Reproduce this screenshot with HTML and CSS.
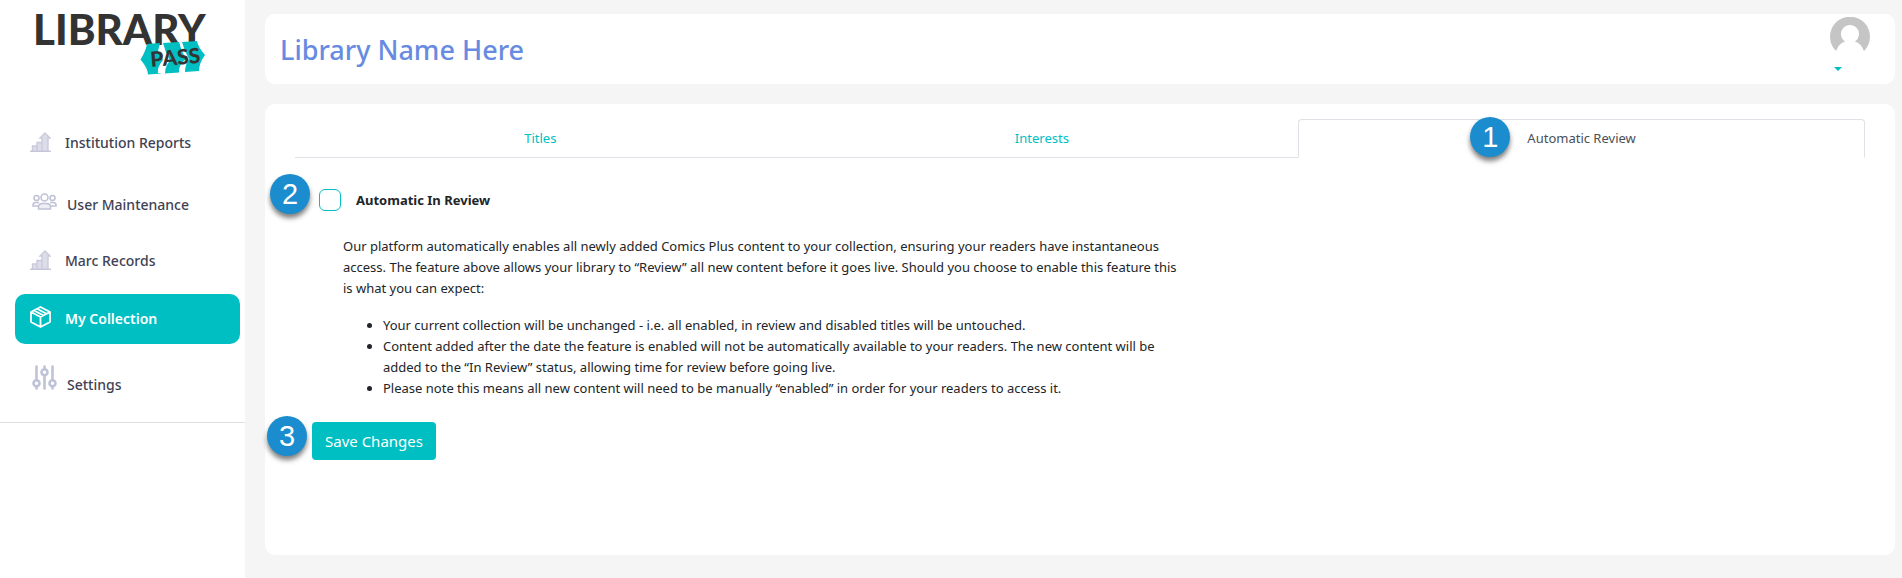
FILE: index.html
```html
<!DOCTYPE html>
<html lang="en">
<head>
<meta charset="utf-8">
<title>My Collection - Library Pass</title>
<meta name="viewport" content="width=device-width, initial-scale=1">
<link rel="stylesheet" href="styles.css">
</head>
<body>
<svg width="0" height="0" class="sprite" aria-hidden="true">
	<symbol id="icon-chart" viewBox="0 0 21 20">
		<path d="M2.500 19v-5H7v5M7 19v-8.500h5V19M12 19V6h-2l5-5 5 5h-2v13" fill="#dcdde8" stroke="#c9cbdc" stroke-width="1.4"/>
		<path d="M0 19.3h21" stroke="#c3c5d8" stroke-width="1.4"/>
	</symbol>
</svg>
<div class="wrapper">
	<nav class="sidebar">
		<a href="#" class="logo">
			<svg width="180" height="70" viewBox="0 0 180 70" role="img" aria-label="Library Pass">
				<text x="1" y="37" class="logo_big">LIBRARY</text>
				<path d="M115 36l13-1-2 8 5 9q-6 7-5 13l4 .500-14 1q0-6-7.500-15 5-8 6.500-15.500z" fill="#00bfc3"/>
				<path d="M131 35l16-1q2 9 7 17-8 6-7 13.500l-14 1q0-7 5-13-5-9-7-17.500zM150 34l15-1q1 6 8 14-6 8-6 16l-14 1q0-7 4-13-5-9-7-17z" fill="#00bfc3"/>
				<text x="119" y="59" transform="rotate(-5 119 59)" class="logo_small">PASS</text>
			</svg>
		</a>
		<ul class="menu">
			<li><a href="#"><svg class="icon" width="21" height="20"><use href="#icon-chart"/></svg>Institution Reports</a></li>
			<li class="users"><a href="#"><svg class="icon icon_tall" width="25" height="17" viewBox="0 0 25 17" fill="none" stroke="#bfc2d6" stroke-width="1.5">
				<circle cx="4.500" cy="5" r="2.500"/><circle cx="20.500" cy="5" r="2.500"/><circle cx="12.500" cy="4.500" r="3.500"/>
				<path d="M6 13H1v-1q0-2.500 3-2.500h3M19 13h5v-1q0-2.500-3-2.500h-3"/>
				<path d="M6.500 16v-2q0-3.500 4-3.500h4q4 0 4 3.500v2z" fill="#eeeef4"/>
			</svg>User Maintenance</a></li>
			<li class="marc"><a href="#"><svg class="icon" width="21" height="20"><use href="#icon-chart"/></svg>Marc Records</a></li>
			<li class="active"><a href="#"><svg class="icon" width="21" height="22" viewBox="0 0 21 22" fill="none" stroke="#fff" stroke-width="1.800" stroke-linejoin="round">
				<path d="M10.500 1l9.500 5v10l-9.500 5L1 16V6zM1 6l9.500 5L20 6M10.500 11v10M4 4.500l9.500 5M7 2.800l9.500 5"/>
			</svg>My Collection</a></li>
			<li><a href="#"><svg class="icon icon_tall" width="25" height="25" viewBox="0 0 25 25" fill="none" stroke="#bfc3d7" stroke-width="2.600" stroke-linecap="round">
				<path d="M4.500 1.500v13M4.500 22v1.500M12.500 1.500V4M12.500 11v12.500M20.500 1.500v13M20.500 22v1.500"/>
				<circle cx="4.500" cy="18.300" r="3"/><circle cx="12.500" cy="7.300" r="3"/><circle cx="20.500" cy="18.300" r="3"/>
			</svg>Settings</a></li>
		</ul>
	</nav>
	<div class="main">
		<header class="card topbar">
			<h1>Library Name Here</h1>
			<button type="button" class="user" aria-label="Account">
				<svg width="40" height="40" viewBox="0 0 40 40">
					<path d="M6 34A20 20 0 1 1 34 34Q31 26 25 24.500A9 9 0 1 0 15 24.500Q9 26 6 34z" fill="#c5c5c5"/>
				</svg>
				<span class="caret"></span>
			</button>
		</header>
		<main class="card content">
			<ul class="tabs">
				<li><a href="#">Titles</a></li>
				<li><a href="#">Interests</a></li>
				<li class="active"><a href="#"><span class="marked">Automatic Review<b class="step step_tab">1</b></span></a></li>
			</ul>
			<form class="review">
				<div class="check">
					<b class="step step_check">2</b>
					<input type="checkbox" id="auto_review">
					<label for="auto_review">Automatic In Review</label>
				</div>
				<div class="text">
					<p>Our platform automatically enables all newly added Comics Plus content to your collection, ensuring your readers have instantaneous access. The feature above allows your library to “Review” all new content before it goes live. Should you choose to enable this feature this is what you can expect:</p>
					<ul>
						<li>Your current collection will be unchanged - i.e. all enabled, in review and disabled titles will be untouched.</li>
						<li>Content added after the date the feature is enabled will not be automatically available to your readers. The new content will be added to the “In Review” status, allowing time for review before going live.</li>
						<li>Please note this means all new content will need to be manually “enabled” in order for your readers to access it.</li>
					</ul>
				</div>
				<div class="actions">
					<b class="step step_save">3</b>
					<button type="submit" class="save">Save Changes</button>
				</div>
			</form>
		</main>
	</div>
</div>
</body>
</html>
```
FILE: styles.css
```css
*{ margin:0; padding:0; box-sizing:border-box;}
body{ background:#f5f5f5; color:#212529; font:13px/21px "Noto Sans","Open Sans",sans-serif;}
a{ color:#00bfc3; text-decoration:none;}
ul{ list-style:none;}
.sprite{ position:absolute;}
.wrapper{ display:flex; min-height:100vh;}

/* sidebar */
.sidebar{ width:245px; flex-shrink:0; background:#fff;}
.logo{ display:block; padding:8px 0 0 32px; height:118px;}
.logo svg{ display:block; overflow:visible;}
.logo_big{ font:900 42px Lato,sans-serif; fill:#333;}
.logo_small{ font:900 21px Lato,sans-serif; fill:#333;}
.menu{ padding:0 5px 0 15px; border-bottom:1px solid #dfdfdf;}
.menu li{ height:50px; margin-bottom:12px; border-radius:10px;}
.menu .users{ margin-bottom:6px;}
.menu .marc{ margin-bottom:8px;}
.menu a{ display:block; padding-left:15px; font-size:14px; font-weight:500; line-height:50px; color:#3f4254; white-space:nowrap;}
.menu .active{ background:#00bfc3; margin-bottom:16px;}
.menu .active a{ color:#fff; font-weight:600;}
.icon{ margin-right:14px; vertical-align:-4px;}
.icon_tall{ margin:0 10px 0 2px; vertical-align:baseline;}

/* main column */
.main{ flex:1; min-width:0; display:flex; flex-direction:column; gap:20px; padding:14px 7px 23px 20px;}
.card{ background:#fff; border-radius:10px;}
.topbar{ display:flex; justify-content:space-between; align-items:center; height:70px; padding:2px 25px 0 15px;}
.topbar h1{ font-size:27px; line-height:38px; font-weight:500; color:#678be1;}
.user{ align-self:flex-start; padding-top:1px; border:0; background:none; text-align:left; cursor:pointer;}
.user svg{ display:block;}
.caret{ display:block; width:8px; margin:10px 0 0 4px; border:4px solid transparent; border-top-color:#00bfc3; border-bottom:0;}
.content{ flex:1; padding:15px 30px;}

/* tabs */
.tabs{ display:flex; border-bottom:1px solid #dee2e6;}
.tabs li{ flex:1 1 auto; margin-bottom:-1px;}
.tabs a{ display:block; padding:8px 16px; border:1px solid transparent; border-radius:4px 4px 0 0; text-align:center;}
.tabs .active a{ color:#495057; background:#fff; border-color:#dee2e6 #dee2e6 #fff;}
.marked{ position:relative;}

/* numbered steps */
.step{ position:absolute; width:40px; height:40px; border-radius:50%; background:#1b8ccd; color:#fff; font:29px/40px "Liberation Sans",Arial,sans-serif; text-align:center; box-shadow:0 4px 5px rgba(0,0,0,.5);}
.step_tab{ top:-12px; left:-57px;}
.step_check{ top:-15px; left:-49px;}
.step_save{ top:-6px; left:-45px;}

.review{ padding:31px 17px 0;}
.check{ position:relative; display:flex; align-items:center; gap:15px; margin-left:7px;}
.check input{ appearance:none; width:22px; height:22px; border:1px solid #00bfc3; border-radius:6px; background:#fff;}
.check input:checked{ background:#00bfc3;}
.check label{ font-weight:700;}
.text{ max-width:876px; padding:25px 0 0 31px;}
.text ul{ margin:16px 0 23px; padding-left:40px; list-style:disc;}
.actions{ position:relative;}
.save{ height:38px; padding:0 13px; border:0; border-radius:4px; background:#00bfc3; color:#fff; font:15px "Noto Sans","Open Sans",sans-serif; cursor:pointer;}
```
